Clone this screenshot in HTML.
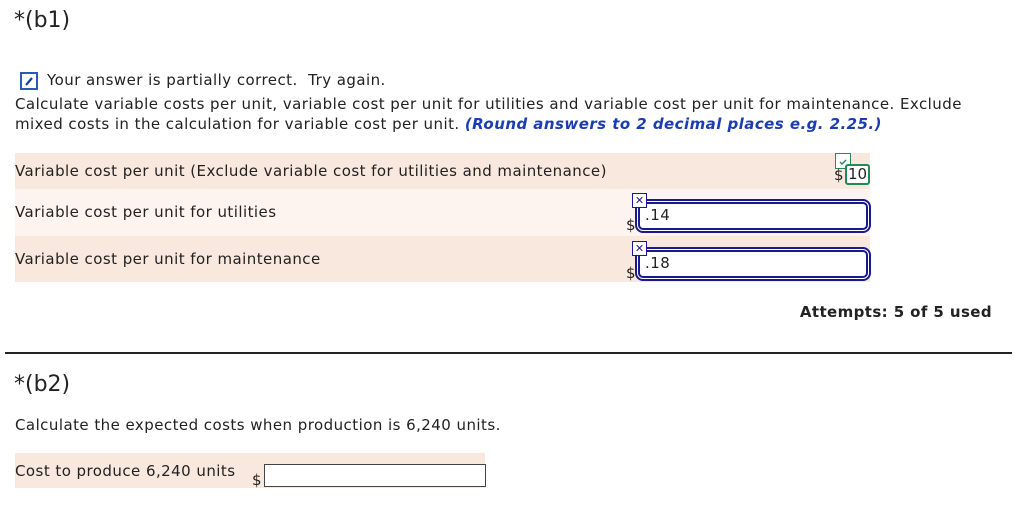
<!DOCTYPE html>
<html><head><style>
body{margin:0;width:1024px;height:505px;background:#fff;font-family:"DejaVu Sans","Liberation Sans",sans-serif;color:#222;position:relative;overflow:hidden}
.a{position:absolute;white-space:nowrap}
.t{font-size:15px;letter-spacing:0.45px}
.row{position:absolute;left:15px;width:855px;background:#f9e8dd}
.inp{position:absolute;border:2px solid #1a1a8c;border-radius:5px;box-shadow:0 0 0 1px #fff,0 0 0 3px #1a1a8c;background:#fff;height:24px}
.x{position:absolute;width:13px;height:13px;border:1px solid #1a1aa0;background:#fff;color:#1a1aa0;font-size:11px;font-weight:bold;line-height:13px;text-align:center}
</style></head><body>
<div class="a" style="left:14px;top:8px;font-size:22px">*(b1)</div>
<div class="a" style="left:20px;top:72px;width:18px;height:18px;border:2px solid #2a5ab8;box-sizing:border-box"><svg width="14" height="14" style="position:absolute;left:0;top:0"><path d="M4 11 L10 4" stroke="#1a3ea8" stroke-width="2.2"/></svg></div>
<div class="a t" style="left:47px;top:71px">Your answer is partially correct.&nbsp; Try again.</div>
<div class="a t" style="left:15px;top:95px">Calculate variable costs per unit, variable cost per unit for utilities and variable cost per unit for maintenance. Exclude</div>
<div class="a t" style="left:15px;top:115px">mixed costs in the calculation for variable cost per unit. <b style="color:#1a3eb0;font-style:italic">(Round answers to 2 decimal places e.g. 2.25.)</b></div>
<div class="row" style="top:153px;height:36px"></div>
<div class="row" style="top:189px;height:47px;background:#fdf4ef"></div>
<div class="row" style="top:236px;height:46px"></div>
<div class="a t" style="left:15px;top:162px">Variable cost per unit (Exclude variable cost for utilities and maintenance)</div>
<div class="a t" style="left:15px;top:203px">Variable cost per unit for utilities</div>
<div class="a t" style="left:15px;top:250px">Variable cost per unit for maintenance</div>
<div class="a" style="left:835px;top:153px;width:14px;height:14px;border:1px solid #2a8a5a;background:#fff"><svg width="14" height="14"><path d="M4 7 L6 9 L10 5" stroke="#2a8a5a" stroke-width="1.5" fill="none"/></svg></div>
<div class="a t" style="left:834px;top:166px">$</div>
<div class="a t" style="left:845px;top:164px;border:2px solid #1f8a55;border-radius:3px;padding:0 1px;line-height:17px;background:#fff;letter-spacing:0">10</div>
<div class="inp" style="left:638px;top:202px;width:226px"></div>
<div class="a t" style="left:645px;top:206px">.14</div>
<div class="a t" style="left:626px;top:216px">$</div>
<div class="x" style="left:632px;top:193px">✕</div>
<div class="inp" style="left:638px;top:250px;width:226px"></div>
<div class="a t" style="left:645px;top:254px">.18</div>
<div class="a t" style="left:626px;top:264px">$</div>
<div class="x" style="left:632px;top:241px">✕</div>
<div class="a t" style="right:32px;top:303px;font-weight:bold;letter-spacing:0.4px">Attempts: 5 of 5 used</div>
<div class="a" style="left:5px;top:352px;width:1007px;height:2px;background:#222"></div>
<div class="a" style="left:14px;top:372px;font-size:22px">*(b2)</div>
<div class="a t" style="left:15px;top:416px">Calculate the expected costs when production is 6,240 units.</div>
<div class="row" style="top:453px;width:470px;height:35px"></div>
<div class="a t" style="left:15px;top:462px">Cost to produce 6,240 units</div>
<div class="a t" style="left:252px;top:471px">$</div>
<div class="a" style="left:264px;top:464px;width:220px;height:21px;border:1px solid #444;background:#fff"></div>
</body></html>
